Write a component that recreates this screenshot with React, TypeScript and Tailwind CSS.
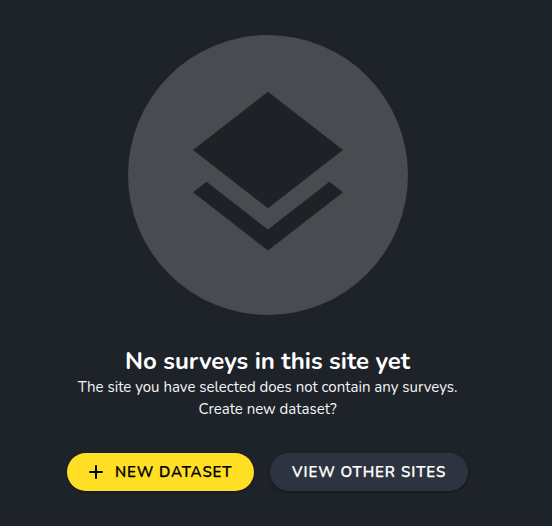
export default function App() {
  return (
    <main className="flex h-[526px] w-[552px] flex-col items-center overflow-hidden bg-[#1e2229] pr-4 pt-[35px] font-['Nunito','Open_Sans',sans-serif] text-white antialiased">
      <div className="flex size-[280px] shrink-0 items-center justify-center rounded-full bg-[#484b4f]">
        <svg viewBox="0 0 24 24" className="size-[200px] fill-[#1e2226]">
          <path d="M11.99 18.54l-7.37-5.73L3 14.07l9 7 9-7-1.63-1.27-7.38 5.74zM12 16l7.36-5.73L21 9l-9-7-9 7 1.63 1.27L12 16z" />
        </svg>
      </div>
      <h1 className="mt-[30px] whitespace-nowrap pr-px text-[24px] font-bold leading-[32px] tracking-[-0.02px]">
        No surveys in this site yet
      </h1>
      <p className="-mt-px whitespace-nowrap pr-px text-center text-[15px] leading-[22px] text-[#f4f4f5]">
        The site you have selected does not contain any surveys.
        <br />
        Create new dataset?
      </p>
      <div className="mt-[33px] flex gap-4 pr-px">
        <button className="flex h-[38px] w-[187px] items-center whitespace-nowrap rounded-full bg-[#ffdf24] pl-[19px] text-[15px] font-semibold tracking-[0.88px] text-black shadow-[0_1px_3px_rgba(0,0,0,0.3)] [-webkit-text-stroke:0.25px_currentColor]">
          <svg viewBox="0 0 20 20" className="mr-[9px] size-[20px] shrink-0 fill-black">
            <path d="M16.7 11H11v5.7H9V11H3.3V9H9V3.3h2V9h5.7z" />
          </svg>
          NEW DATASET
        </button>
        <button className="flex h-[38px] w-[198px] items-center whitespace-nowrap rounded-full bg-[#2d343f] pl-[22px] text-[15px] font-semibold tracking-[0.95px] shadow-[0_1px_3px_rgba(0,0,0,0.3)] [-webkit-text-stroke:0.25px_currentColor]">
          VIEW OTHER SITES
        </button>
      </div>
    </main>
  );
}
